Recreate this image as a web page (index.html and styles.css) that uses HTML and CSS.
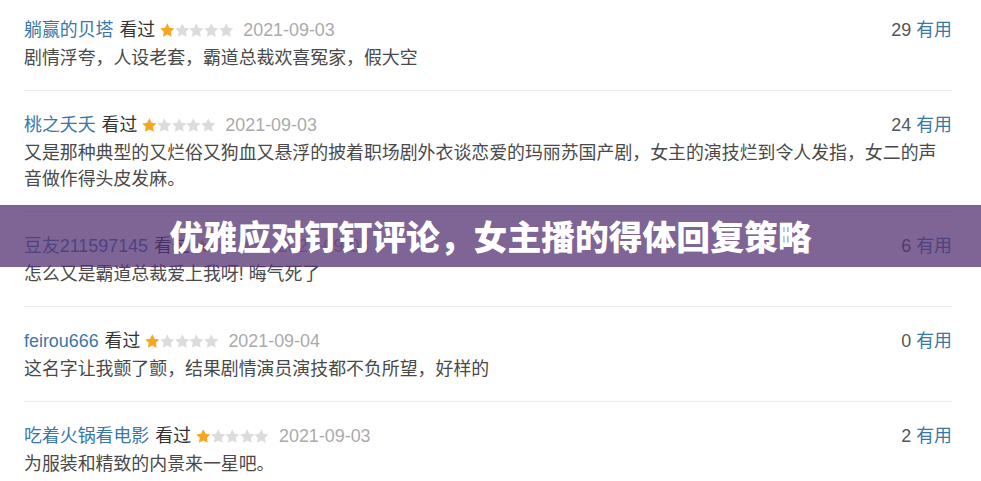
FILE: index.html
```html
<!DOCTYPE html>
<html>
<head lang="zh">
  <meta charset="UTF-8">
  <title>短评</title>
  <link rel="stylesheet" href="styles.css">
</head>
<body>
  <div class="page">
    <ul class="comments">
      <li>
        <div class="info">
          <span class="meta">
            <a class="user">躺赢的贝塔</a>
            <span class="seen">看过</span>
            <span class="stars">
              <svg viewBox="0 0 14 14"><path class="on" d="M7 0.3l2.1 4.3 4.7 0.6-3.4 3.3 0.8 4.7L7 11 2.8 13.2 3.6 8.5 0.2 5.2l4.7-0.6z"/></svg><svg viewBox="0 0 14 14"><path d="M7 0.3l2.1 4.3 4.7 0.6-3.4 3.3 0.8 4.7L7 11 2.8 13.2 3.6 8.5 0.2 5.2l4.7-0.6z"/></svg><svg viewBox="0 0 14 14"><path d="M7 0.3l2.1 4.3 4.7 0.6-3.4 3.3 0.8 4.7L7 11 2.8 13.2 3.6 8.5 0.2 5.2l4.7-0.6z"/></svg><svg viewBox="0 0 14 14"><path d="M7 0.3l2.1 4.3 4.7 0.6-3.4 3.3 0.8 4.7L7 11 2.8 13.2 3.6 8.5 0.2 5.2l4.7-0.6z"/></svg><svg viewBox="0 0 14 14"><path d="M7 0.3l2.1 4.3 4.7 0.6-3.4 3.3 0.8 4.7L7 11 2.8 13.2 3.6 8.5 0.2 5.2l4.7-0.6z"/></svg>
            </span>
            <span class="date">2021-09-03</span>
          </span>
          <span class="votes"><i>29</i> <a>有用</a></span>
        </div>
        <p class="text">剧情浮夸，人设老套，霸道总裁欢喜冤家，假大空</p>
      </li>
      <li>
        <div class="info">
          <span class="meta">
            <a class="user">桃之夭夭</a>
            <span class="seen">看过</span>
            <span class="stars">
              <svg viewBox="0 0 14 14"><path class="on" d="M7 0.3l2.1 4.3 4.7 0.6-3.4 3.3 0.8 4.7L7 11 2.8 13.2 3.6 8.5 0.2 5.2l4.7-0.6z"/></svg><svg viewBox="0 0 14 14"><path d="M7 0.3l2.1 4.3 4.7 0.6-3.4 3.3 0.8 4.7L7 11 2.8 13.2 3.6 8.5 0.2 5.2l4.7-0.6z"/></svg><svg viewBox="0 0 14 14"><path d="M7 0.3l2.1 4.3 4.7 0.6-3.4 3.3 0.8 4.7L7 11 2.8 13.2 3.6 8.5 0.2 5.2l4.7-0.6z"/></svg><svg viewBox="0 0 14 14"><path d="M7 0.3l2.1 4.3 4.7 0.6-3.4 3.3 0.8 4.7L7 11 2.8 13.2 3.6 8.5 0.2 5.2l4.7-0.6z"/></svg><svg viewBox="0 0 14 14"><path d="M7 0.3l2.1 4.3 4.7 0.6-3.4 3.3 0.8 4.7L7 11 2.8 13.2 3.6 8.5 0.2 5.2l4.7-0.6z"/></svg>
            </span>
            <span class="date">2021-09-03</span>
          </span>
          <span class="votes"><i>24</i> <a>有用</a></span>
        </div>
        <p class="text">又是那种典型的又烂俗又狗血又悬浮的披着职场剧外衣谈恋爱的玛丽苏国产剧，女主的演技烂到令人发指，女二的声音做作得头皮发麻。</p>
      </li>
      <li>
        <div class="info">
          <span class="meta">
            <a class="user">豆友211597145</a>
            <span class="seen">看过</span>
            <span class="stars">
              <svg viewBox="0 0 14 14"><path class="on" d="M7 0.3l2.1 4.3 4.7 0.6-3.4 3.3 0.8 4.7L7 11 2.8 13.2 3.6 8.5 0.2 5.2l4.7-0.6z"/></svg><svg viewBox="0 0 14 14"><path d="M7 0.3l2.1 4.3 4.7 0.6-3.4 3.3 0.8 4.7L7 11 2.8 13.2 3.6 8.5 0.2 5.2l4.7-0.6z"/></svg><svg viewBox="0 0 14 14"><path d="M7 0.3l2.1 4.3 4.7 0.6-3.4 3.3 0.8 4.7L7 11 2.8 13.2 3.6 8.5 0.2 5.2l4.7-0.6z"/></svg><svg viewBox="0 0 14 14"><path d="M7 0.3l2.1 4.3 4.7 0.6-3.4 3.3 0.8 4.7L7 11 2.8 13.2 3.6 8.5 0.2 5.2l4.7-0.6z"/></svg><svg viewBox="0 0 14 14"><path d="M7 0.3l2.1 4.3 4.7 0.6-3.4 3.3 0.8 4.7L7 11 2.8 13.2 3.6 8.5 0.2 5.2l4.7-0.6z"/></svg>
            </span>
            <span class="date">2021-09-03</span>
          </span>
          <span class="votes"><i>6</i> <a>有用</a></span>
        </div>
        <p class="text">怎么又是霸道总裁爱上我呀! 晦气死了</p>
      </li>
      <li>
        <div class="info">
          <span class="meta">
            <a class="user">feirou666</a>
            <span class="seen">看过</span>
            <span class="stars">
              <svg viewBox="0 0 14 14"><path class="on" d="M7 0.3l2.1 4.3 4.7 0.6-3.4 3.3 0.8 4.7L7 11 2.8 13.2 3.6 8.5 0.2 5.2l4.7-0.6z"/></svg><svg viewBox="0 0 14 14"><path d="M7 0.3l2.1 4.3 4.7 0.6-3.4 3.3 0.8 4.7L7 11 2.8 13.2 3.6 8.5 0.2 5.2l4.7-0.6z"/></svg><svg viewBox="0 0 14 14"><path d="M7 0.3l2.1 4.3 4.7 0.6-3.4 3.3 0.8 4.7L7 11 2.8 13.2 3.6 8.5 0.2 5.2l4.7-0.6z"/></svg><svg viewBox="0 0 14 14"><path d="M7 0.3l2.1 4.3 4.7 0.6-3.4 3.3 0.8 4.7L7 11 2.8 13.2 3.6 8.5 0.2 5.2l4.7-0.6z"/></svg><svg viewBox="0 0 14 14"><path d="M7 0.3l2.1 4.3 4.7 0.6-3.4 3.3 0.8 4.7L7 11 2.8 13.2 3.6 8.5 0.2 5.2l4.7-0.6z"/></svg>
            </span>
            <span class="date">2021-09-04</span>
          </span>
          <span class="votes"><i>0</i> <a>有用</a></span>
        </div>
        <p class="text">这名字让我颤了颤，结果剧情演员演技都不负所望，好样的</p>
      </li>
      <li>
        <div class="info">
          <span class="meta">
            <a class="user">吃着火锅看电影</a>
            <span class="seen">看过</span>
            <span class="stars">
              <svg viewBox="0 0 14 14"><path class="on" d="M7 0.3l2.1 4.3 4.7 0.6-3.4 3.3 0.8 4.7L7 11 2.8 13.2 3.6 8.5 0.2 5.2l4.7-0.6z"/></svg><svg viewBox="0 0 14 14"><path d="M7 0.3l2.1 4.3 4.7 0.6-3.4 3.3 0.8 4.7L7 11 2.8 13.2 3.6 8.5 0.2 5.2l4.7-0.6z"/></svg><svg viewBox="0 0 14 14"><path d="M7 0.3l2.1 4.3 4.7 0.6-3.4 3.3 0.8 4.7L7 11 2.8 13.2 3.6 8.5 0.2 5.2l4.7-0.6z"/></svg><svg viewBox="0 0 14 14"><path d="M7 0.3l2.1 4.3 4.7 0.6-3.4 3.3 0.8 4.7L7 11 2.8 13.2 3.6 8.5 0.2 5.2l4.7-0.6z"/></svg><svg viewBox="0 0 14 14"><path d="M7 0.3l2.1 4.3 4.7 0.6-3.4 3.3 0.8 4.7L7 11 2.8 13.2 3.6 8.5 0.2 5.2l4.7-0.6z"/></svg>
            </span>
            <span class="date">2021-09-03</span>
          </span>
          <span class="votes"><i>2</i> <a>有用</a></span>
        </div>
        <p class="text">为服装和精致的内景来一星吧。</p>
      </li>
    </ul>
    <div class="banner">优雅应对钉钉评论，女主播的得体回复策略</div>
  </div>
</body>
</html>
```

FILE: styles.css
```css
* {
  margin: 0;
  padding: 0;
}
html, body {
  background: #fff;
  overflow: hidden;
}
body {
  font-family: "Liberation Sans", "Noto Sans CJK SC", sans-serif;
  font-size: 17.9px;
  color: #494949;
}
ul {
  list-style: none;
}
i {
  font-style: normal;
}
.page {
  position: relative;
  width: 981px;
  height: 481px;
}
.comments {
  margin: -4px 29px 0 24px;
}
.comments li {
  padding: 21px 0 19px;
  border-bottom: 1px solid #eaeaea;
}
.info {
  display: flex;
  justify-content: space-between;
  align-items: center;
  height: 26px;
  line-height: 26px;
  margin-bottom: 2px;
}
.meta {
  display: flex;
  align-items: center;
}
.user {
  color: #3a77a8;
  margin-right: 6px;
}
.seen {
  color: #333;
  margin-right: 5px;
}
.stars {
  display: flex;
  margin-right: 10px;
}
.stars svg {
  width: 14.6px;
  height: 14.6px;
  display: block;
}
.stars path {
  fill: #dcdcdc;
}
.stars path.on {
  fill: #f7a622;
}
.date {
  color: #aaa;
}
.votes i {
  color: #555;
}
.votes a {
  color: #3a77a8;
}
.text {
  line-height: 26px;
}
.banner {
  position: absolute;
  left: 0;
  right: 0;
  top: 209px;
  height: 62px;
  line-height: 62px;
  background: rgba(84, 48, 115, 0.75);
  color: #fff;
  text-align: center;
  font-family: "Noto Sans CJK SC", sans-serif;
  font-size: 33.8px;
  font-weight: 900;
}
```
